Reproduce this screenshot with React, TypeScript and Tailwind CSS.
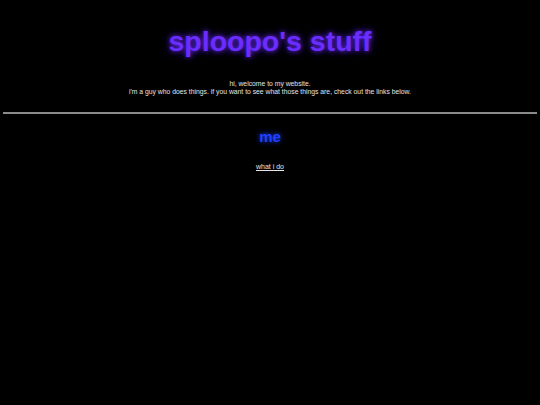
export default function App() {
  return (
    <div className="min-h-[405px] w-full bg-black font-['Liberation_Sans',Arial,sans-serif] text-white">
      <div className="flex flex-col items-center pt-[24px]">
        <h1 className="text-[28.5px] font-bold leading-[34px] text-[#6a2cff] [text-shadow:0_0_5px_#5a24d8,0_0_10px_#3a1690]">
          sploopo's stuff
        </h1>
        <p className="mt-[22px] text-center text-[6.8px] leading-[8px] text-[#e5e5e5]">
          hi, welcome to my website.
          <br />
          i'm a guy who does things. if you want to see what those things are, check out the links below.
        </p>
      </div>
      <hr className="mx-[3px] mt-[16px] border-t-2 border-[#8a8a8a]" />
      <div className="flex flex-col items-center">
        <h2 className="mt-[14px] text-[15px] font-bold leading-[18px] text-[#2040ff] [text-shadow:0_0_5px_#2040ff]">
          me
        </h2>
        <a href="#" className="mt-[17px] text-[7px] leading-[8px] text-[#e5e5e5] underline">
          what i do
        </a>
      </div>
    </div>
  );
}
